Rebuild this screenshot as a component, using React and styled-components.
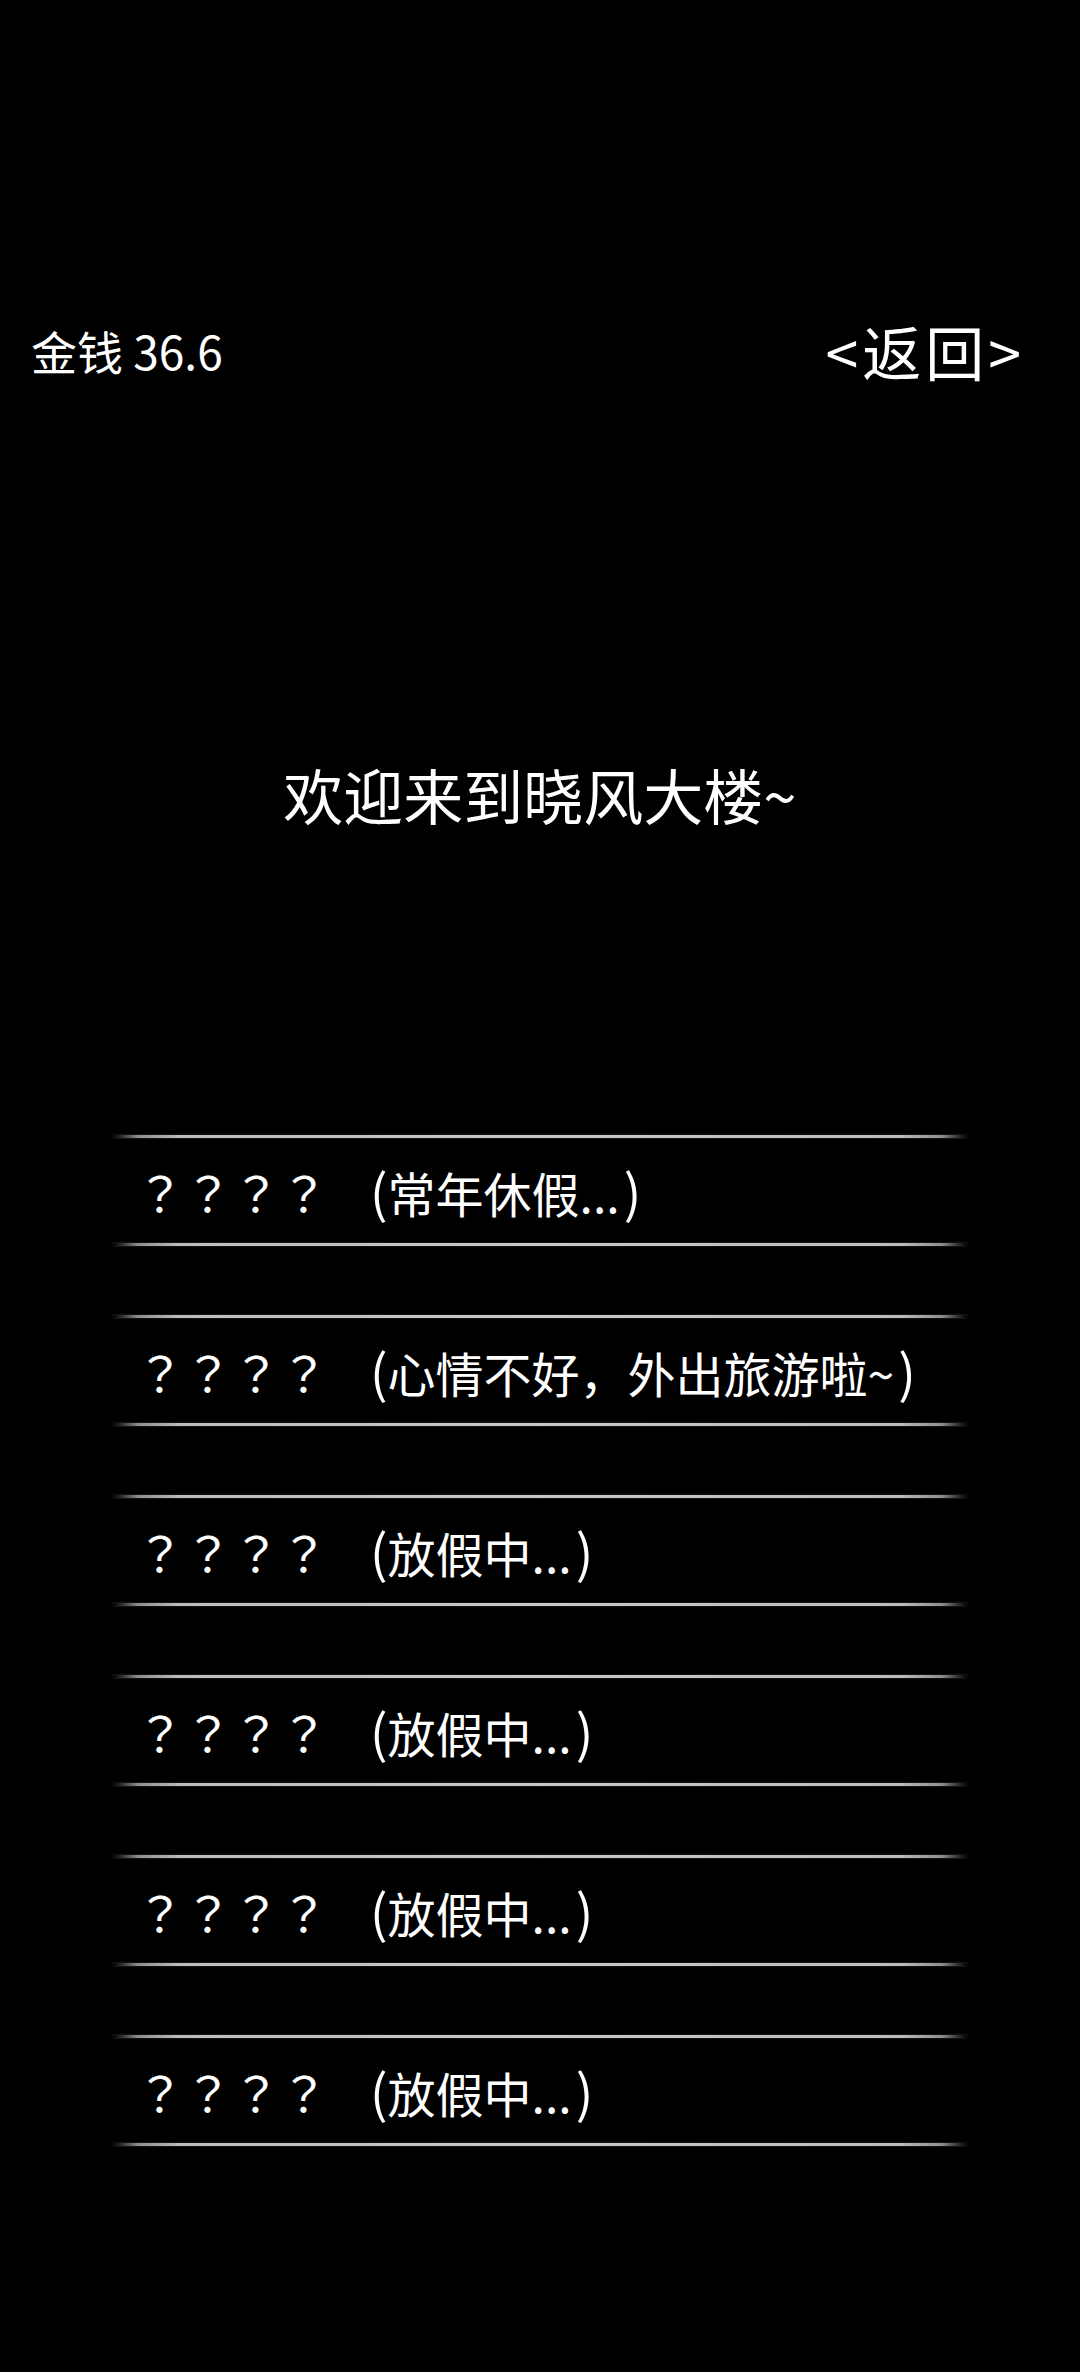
import styled, { createGlobalStyle } from "styled-components";

const GlobalStyle = createGlobalStyle`
  html, body {
    margin: 0;
    padding: 0;
    background: #000;
  }
  body {
    font-family: "Noto Sans CJK SC", "Noto Sans", sans-serif;
    color: #fff;
  }
`;

const Page = styled.div`
  min-height: 2372px;
  background: #000;
  display: flex;
  flex-direction: column;
`;

const TopBar = styled.div`
  display: flex;
  justify-content: space-between;
  align-items: center;
  height: 100px;
  margin-top: 300px;
  padding: 0 55px 0 31px;
`;

const Money = styled.span`
  font-size: 46px;
  line-height: 1;
`;

const BackButton = styled.button`
  background: none;
  border: none;
  padding: 0;
  color: #fff;
  font-family: inherit;
  font-size: 59px;
  letter-spacing: 4px;
  line-height: 1;
  cursor: pointer;
`;

const Title = styled.h1`
  margin: 364px 0 0;
  font-size: 60px;
  font-weight: 400;
  line-height: 1;
  text-align: center;
`;

const RoomList = styled.ul`
  list-style: none;
  margin: 310px auto 0;
  padding: 0;
  width: 854px;
  display: flex;
  flex-direction: column;
  gap: 67px;
`;

const Rule = styled.div`
  height: 3px;
  margin: 1px 0;
  background: linear-gradient(
    90deg,
    rgba(190, 190, 190, 0) 0%,
    rgba(190, 190, 190, 0.75) 3%,
    #bdbdbd 8%,
    #c8c8c8 50%,
    #bdbdbd 92%,
    rgba(190, 190, 190, 0.75) 97%,
    rgba(190, 190, 190, 0) 100%
  );
  box-shadow: 0 0 2px rgba(255, 255, 255, 0.25);
`;

const Room = styled.li`
  display: flex;
  flex-direction: column;
  cursor: pointer;
`;

const RoomName = styled.div`
  height: 103px;
  display: flex;
  align-items: center;
  gap: 42px;
  padding-left: 23px;
  font-size: 48px;
  line-height: 1;
  white-space: nowrap;
`;

/* locked room name: centred fullwidth question marks */
const Mask = styled.span`
  font-family: "Noto Sans CJK JP", "Noto Sans CJK SC", sans-serif;
`;

const Note = styled.span``;

const Paren = styled.span`
  font-size: 52px;
  margin-left: ${(p) => (p.$close ? "4px" : "0")};
`;

const rooms = [
  "常年休假...",
  "心情不好，外出旅游啦~",
  "放假中...",
  "放假中...",
  "放假中...",
  "放假中...",
];

export default function App() {
  return (
    <Page>
      <GlobalStyle />
      <TopBar>
        <Money>金钱 36.6</Money>
        <BackButton>&lt;返回&gt;</BackButton>
      </TopBar>
      <Title>欢迎来到晓风大楼~</Title>
      <RoomList>
        {rooms.map((note, i) => (
          <Room key={i}>
            <Rule />
            <RoomName>
              <Mask>？？？？</Mask>
              <Note>
                <Paren>(</Paren>
                {note}
                <Paren $close>)</Paren>
              </Note>
            </RoomName>
            <Rule />
          </Room>
        ))}
      </RoomList>
    </Page>
  );
}
